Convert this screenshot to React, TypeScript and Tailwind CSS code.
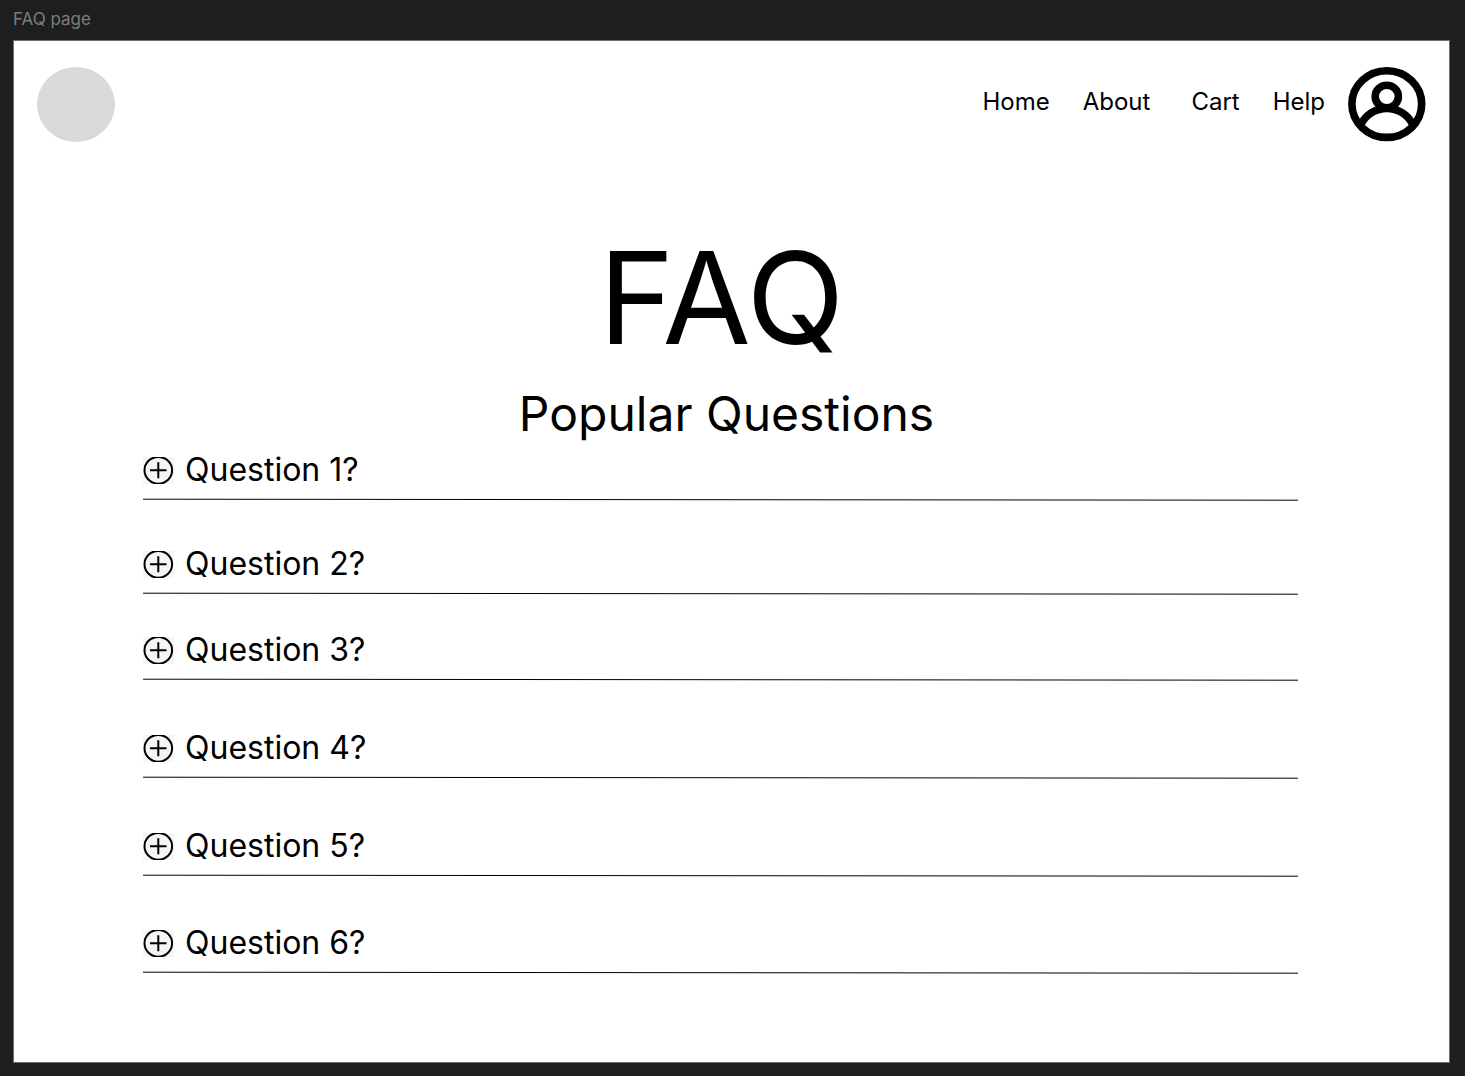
const questions = [
  { label: "Question 1?", space: "" },
  { label: "Question 2?", space: "mt-[43px]" },
  { label: "Question 3?", space: "mt-[35px]" },
  { label: "Question 4?", space: "mt-[47px]" },
  { label: "Question 5?", space: "mt-[47px]" },
  { label: "Question 6?", space: "mt-[46px]" },
];

function PlusIcon() {
  return (
    <svg className="h-[27px] w-[31px] shrink-0 bg-[#f5f5f5]" viewBox="0 0 31 27" fill="none" stroke="black" strokeWidth="2" aria-hidden="true">
      <ellipse cx="15.3" cy="13.3" rx="13.8" ry="13.4" />
      <path d="M7 13.3H23.5M15.3 5.3V21.3" />
    </svg>
  );
}

function UserIcon() {
  return (
    <svg className="h-[75px] w-[78px]" viewBox="0 0 78 75" fill="none" stroke="black" strokeWidth="7.6" aria-hidden="true">
      <ellipse cx="38.8" cy="37.1" rx="34.9" ry="33.3" />
      <ellipse cx="38.8" cy="29.5" rx="11.6" ry="11.2" />
      <path d="M13.2 57A28.8 28.8 0 0 1 64.4 57" />
    </svg>
  );
}

// Divider that drops one pixel over its whole width.
function Rule() {
  return (
    <svg className="mt-2 block h-[3px] w-full" viewBox="0 0 1155 3" preserveAspectRatio="none" aria-hidden="true">
      <path d="M0 1.2L1155 2.2" stroke="black" strokeWidth="1" />
    </svg>
  );
}

export default function App() {
  return (
    <div className="flex min-h-screen flex-col bg-[#1e1e1e] pr-[15px] pb-[13px] pl-[13px] font-['Inter',sans-serif] text-black">
      <p className="pt-[7px] pb-[9px] text-[17px] leading-6 text-[#7d7d7d]">FAQ page</p>
      <div className="flex-1 border border-[#6e6e6e] bg-white">
        <header className="flex items-center justify-between px-[23px] pt-[26px]">
          <a href="#" aria-label="Logo" className="h-[75px] w-[78px] rounded-[50%] bg-[#d9d9d9]" />
          <nav className="flex items-center text-2xl">
            <div className="mr-[23px] flex gap-[33px] pb-[6px]">
              <a href="#">Home</a>
              <a href="#">About</a>
              <a href="#" className="ml-2">Cart</a>
              <a href="#">Help</a>
            </div>
            <a href="#" aria-label="Account"><UserIcon /></a>
          </nav>
        </header>
        <main className="pr-[151px] pl-[129px]">
          <h1 className="mt-[92px] pl-0.5 text-center text-[128px] leading-[128px]">FAQ</h1>
          <h2 className="mt-7 pl-3 text-center text-5xl leading-[48px]">Popular Questions</h2>
          <ul className="mt-3">
            {questions.map((q) => (
              <li key={q.label} className={q.space}>
                <button type="button" className="flex w-full items-center gap-[11px] text-left text-[32px] leading-10">
                  <PlusIcon />
                  {q.label}
                </button>
                <Rule />
              </li>
            ))}
          </ul>
        </main>
      </div>
    </div>
  );
}
